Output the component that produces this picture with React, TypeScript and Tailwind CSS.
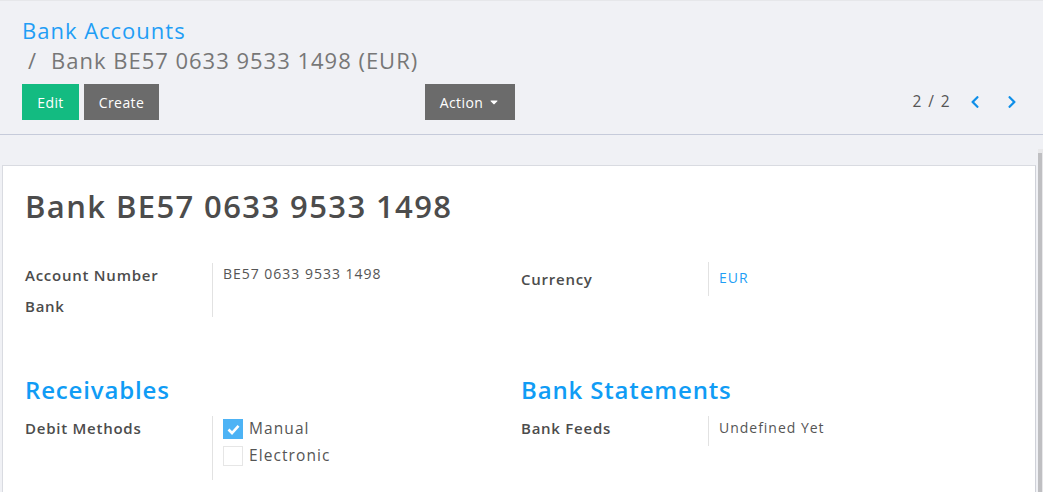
import { FaChevronLeft, FaChevronRight, FaCaretDown } from "react-icons/fa";

const font = { fontFamily: '"Open Sans", "Liberation Sans", sans-serif' };

function Field({ label, children, lineH }: { label: string; children: React.ReactNode; lineH: string }) {
  return (
    <div className="flex">
      <div className="w-[187px] shrink-0 pt-[1px] text-[15px] font-semibold tracking-[0.05em] text-[#4c4c4c]">{label}</div>
      <div className={`border-l border-[#e2e2e2] pl-[10px] ${lineH}`}>{children}</div>
    </div>
  );
}

function Check({ checked, label }: { checked?: boolean; label: string }) {
  return (
    <label className="flex items-center gap-[6px] h-[27px]">
      <span
        className={
          checked
            ? "flex h-[20px] w-[20px] items-center justify-center bg-[#4db3f5] border border-[#4db3f5]"
            : "h-[20px] w-[20px] border border-[#e6e6e6] bg-white"
        }
      >
        {checked && (
          <svg width="13" height="11" viewBox="0 0 13 11">
            <path d="M1.5 5.5 L5 9 L11.5 1.8" fill="none" stroke="white" strokeWidth="2.6" />
          </svg>
        )}
      </span>
      <span className="text-[15.5px] tracking-[0.07em] text-[#555]">{label}</span>
    </label>
  );
}

export default function App() {
  return (
    <div className="w-[1043px] h-[492px] overflow-hidden bg-[#f0f1f5]" style={font}>
      {/* control panel */}
      <div className="h-[135px] border-t border-[#e6e7ea] border-b border-b-[#c6cbda] px-[22px] pt-[14px]">
        <div className="text-[22px] leading-[30px] tracking-[0.045em] text-[#1f9ef5]">Bank Accounts</div>
        <div className="text-[22px] leading-[30px] tracking-[0.045em] text-[#777] pl-[6px]">
          <span className="mr-[14px]">/</span>Bank BE57 0633 9533 1498 (EUR)
        </div>
        <div className="mt-[9px] flex items-center">
          <div className="flex w-[403px] gap-[5px]">
            <button className="h-[36px] w-[57px] bg-[#13bb81] text-[14px] tracking-[0.03em] text-white">Edit</button>
            <button className="h-[36px] w-[75px] bg-[#6b6b6b] text-[14px] tracking-[0.03em] text-white">Create</button>
          </div>
          <button className="flex h-[36px] w-[90px] items-center justify-center gap-[5px] bg-[#6b6b6b] text-[14px] tracking-[0.03em] text-white">
            Action <FaCaretDown className="text-[12px]" />
          </button>
          <div className="ml-auto flex items-center pr-[2px] text-[#555]">
            <span className="text-[15.5px] tracking-[0.09em]">2 / 2</span>
            <FaChevronLeft className="ml-[17px] text-[14px] text-[#0f8fe8]" />
            <FaChevronRight className="ml-[23px] text-[14px] text-[#0f8fe8]" />
          </div>
        </div>
      </div>

      {/* content */}
      <div className="flex">
        <div className="mt-[30px] ml-[2px] mr-[2px] flex-1 h-[400px] border border-[#d9dbe1] border-r-[#cfd1d8] bg-white px-[22px] pt-[20px]">
          <h1 className="text-[31px] font-semibold leading-[40px] tracking-[0.045em] text-[#4c4c4c]">Bank BE57 0633 9533 1498</h1>

          <div className="mt-[37px] flex">
            <div className="w-[496px]">
              <Field label="Account Number" lineH="h-[54px]">
                <div className="text-[14px] tracking-[0.07em] text-[#555]">BE57 0633 9533 1498</div>
              </Field>
              <div className="-mt-[22px] text-[15px] font-semibold tracking-[0.05em] text-[#4c4c4c]">Bank</div>
            </div>
            <div className="pt-[4px]">
              <Field label="Currency" lineH="h-[34px] -mt-[5px] pt-[5px]">
                <div className="text-[14px] tracking-[0.07em] text-[#1f9ef5]">EUR</div>
              </Field>
            </div>
          </div>

          <div className="mt-[57px] flex">
            <div className="w-[496px]">
              <h2 className="text-[24px] font-semibold leading-[30px] tracking-[0.035em] text-[#109cf5]">Receivables</h2>
              <div className="mt-[11px]">
                <Field label="Debit Methods" lineH="h-[64px]">
                  <Check checked label="Manual" />
                  <Check label="Electronic" />
                </Field>
              </div>
            </div>
            <div>
              <h2 className="text-[24px] font-semibold leading-[30px] tracking-[0.035em] text-[#109cf5]">Bank Statements</h2>
              <div className="mt-[11px]">
                <Field label="Bank Feeds" lineH="h-[30px]">
                  <div className="pt-[1px] text-[14px] tracking-[0.07em] text-[#555]">Undefined Yet</div>
                </Field>
              </div>
            </div>
          </div>
        </div>
        <div className="mt-[14px] w-[5px] h-[400px] bg-[#e8e8ea] flex flex-col">
          <div className="mt-[4px] h-[400px] w-[4px] bg-[#bfbfc2]" />
        </div>
      </div>
    </div>
  );
}
